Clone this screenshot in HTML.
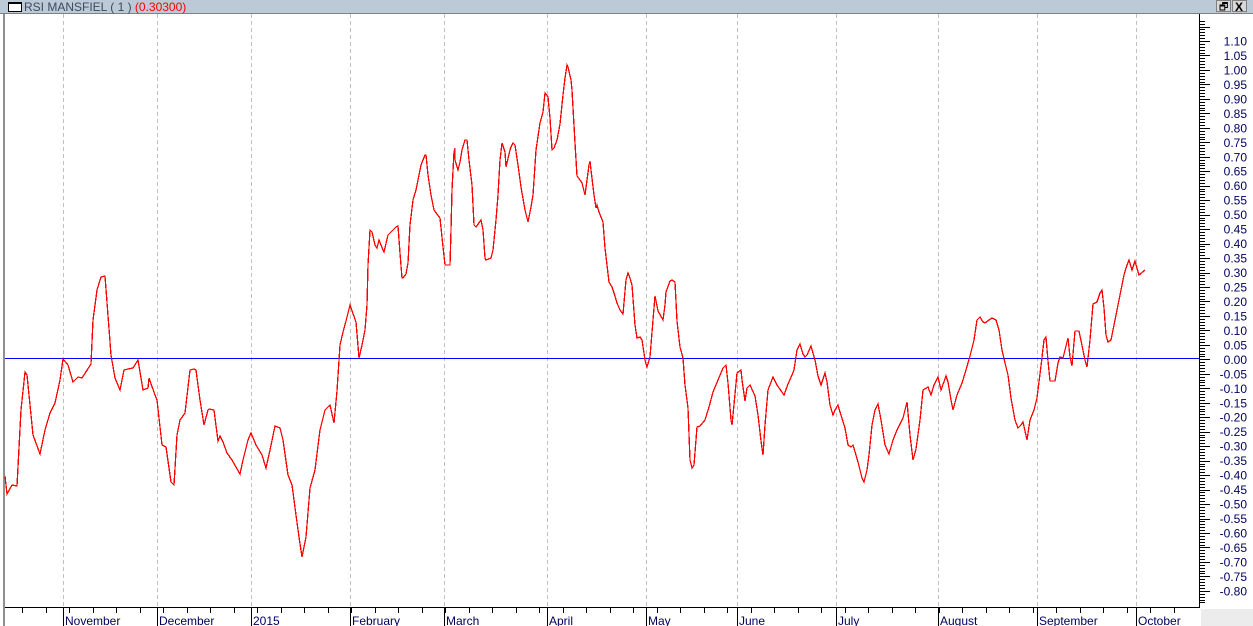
<!DOCTYPE html>
<html><head><meta charset="utf-8"><style>
html,body{margin:0;padding:0;width:1253px;height:626px;overflow:hidden;background:#fff}
svg{display:block}
text{font-family:"Liberation Sans",Arial,sans-serif}
</style></head><body>
<svg id="s" width="1253" height="626" xmlns="http://www.w3.org/2000/svg">
<rect x="0" y="0" width="1253" height="13" fill="#bccad8"/>
<line x1="0" y1="13.5" x2="1253" y2="13.5" stroke="#808080" stroke-width="1"/>
<rect x="8.5" y="2.5" width="13" height="9" fill="#fff" stroke="#000" stroke-width="1"/>
<line x1="8" y1="3" x2="22" y2="3" stroke="#000" stroke-width="2"/>
<text x="24" y="11" font-size="12" fill="#3c4a5a">RSI MANSFIEL ( 1 ) <tspan fill="#ff0000">(0.30300)</tspan></text>
<rect x="1216.5" y="0.5" width="14" height="11" fill="#d8d8d8" stroke="#808080"/>
<rect x="1232.5" y="0.5" width="14" height="11" fill="#d8d8d8" stroke="#808080"/>
<text x="1219" y="10" font-size="10" fill="#000">🗗</text>
<text x="1235" y="11" font-size="12" fill="#000" font-weight="bold">X</text>
<rect x="3" y="14" width="2" height="612" fill="#909090"/>
<g id="grid" stroke="#c0c0c0" stroke-dasharray="4,3" stroke-width="1"></g>
<line x1="5" y1="358.5" x2="1200" y2="358.5" stroke="#0000ff" stroke-width="1"/>
<polyline id="rl" fill="none" stroke="#ff0000" stroke-width="1.3" shape-rendering="crispEdges" points=""/>
<g id="ax" stroke="#000" stroke-width="1"></g>
<g id="lb" font-size="12" fill="#000060"></g>
<rect x="1201" y="609" width="52" height="17" fill="#ececec"/>
</svg>
<script>
var ns="http://www.w3.org/2000/svg";
function el(p,t,a,tx){var e=document.createElementNS(ns,t);for(var k in a)e.setAttribute(k,a[k]);if(tx)e.textContent=tx;document.getElementById(p).appendChild(e);}
var months=[[63,"November"],[157,"December"],[251,"2015"],[350,"February"],[444,"March"],[547,"April"],[646,"May"],[737,"June"],[836,"July"],[938,"August"],[1037,"September"],[1136,"October"]];
months.forEach(function(m){el("grid","line",{x1:m[0]+.5,y1:14,x2:m[0]+.5,y2:607});
el("ax","line",{x1:m[0]+.5,y1:607,x2:m[0]+.5,y2:626});
el("lb","text",{x:m[0]+2,y:625},m[1]);});
el("ax","line",{x1:5,y1:607.5,x2:1200,y2:607.5});
for(var x=22;x<1196;x+=23.5){el("ax","line",{x1:Math.round(x)+.5,y1:607,x2:Math.round(x)+.5,y2:613});}
el("ax","line",{x1:1199.5,y1:14,x2:1199.5,y2:607});
var d=14.47;
for(var k=-10;k<=200;k++){var y=41+k*d/5;if(y<18||y>605)continue;var maj=(k%5==0);
el("ax","line",{x1:1200,y1:Math.round(y)+.5,x2:maj?1210:1205,y2:Math.round(y)+.5});}
for(var j=0;j<=38;j++){var v=1.10-j*0.05;var y=41+j*d;var s=(Math.abs(v)<0.001?"0.00":v.toFixed(2));if(s=="-0.00")s="0.00";
el("lb","text",{x:1247,y:y+4.5,"text-anchor":"end"},s);}
var pts="5,476 7,494 12,485 17,486 21,410 25,372 27,375 33,435 40,454 45,430 50,413 55,403 60,380 63,359 68,365 73,382 78,377 82,378 91,364 93,320 97,290 101,277 105,276 111,355 115,378 120,390 124,370 128,369 133,368 138,360 143,390 148,388 149,378 155,395 157,400 162,445 166,447 171,482 174,485 177,435 180,420 185,413 190,370 194,369 196,370 200,400 204,425 208,410 209,409 214,410 218,441 220,436 223,442 227,453 232,460 236,467 240,474 243,460 248,440 251,433 256,445 262,455 266,468 270,450 275,426 280,428 283,440 288,475 292,485 296,515 299,537 302,557 306,537 310,488 315,470 320,430 325,410 330,405 334,423 337,391 340,345 343,332 346,321 350,305 351,308 356,322 359,358 362,345 365,330 367,305 368,265 370,230 372,232 375,245 377,248 379,240 383,250 384,252 388,235 396,227 398,226 400,253 402,278 403,278 406,274 408,263 410,225 413,200 416,190 421,165 425,155 426,155 428,175 431,195 434,210 440,218 443,247 445,265 450,265 451,230 452,190 454,152 455,148 455,160 458,170 460,162 462,150 465,140 467,140 469,160 472,185 474,225 476,227 481,220 483,230 485,258 486,260 491,258 493,250 496,220 498,195 500,160 502,143 505,152 506,167 510,150 511,147 513,143 515,145 518,165 521,187 525,210 528,222 531,207 533,195 536,150 540,123 543,112 545,93 548,97 550,118 552,150 554,148 557,140 560,124 563,95 565,78 567,65 568,67 571,80 572,90 575,143 577,176 580,180 582,183 585,195 589,165 590,161 591,170 594,195 596,208 597,205 599,212 603,222 605,248 609,282 612,287 615,296 617,303 620,310 623,314 626,280 628,273 630,278 632,285 635,325 637,338 640,337 642,340 645,360 647,367 650,357 653,320 655,296 658,311 663,320 665,305 666,292 670,281 672,280 675,282 677,321 680,347 683,358 685,385 688,408 690,460 692,468 694,465 697,427 700,426 705,420 709,407 713,392 718,380 723,368 726,365 728,383 731,420 732,425 733,415 737,373 741,370 742,380 745,401 747,388 750,385 755,396 758,415 761,441 763,455 765,425 768,390 773,377 777,385 784,395 788,384 792,375 794,370 797,350 800,344 803,354 805,357 807,355 811,346 815,360 818,376 821,385 825,373 827,382 830,405 833,415 835,410 838,405 840,412 845,428 848,445 851,447 853,445 856,455 858,462 862,478 864,482 867,470 869,455 872,425 875,410 878,404 881,420 885,445 889,454 893,440 897,430 903,418 907,402 910,435 913,460 916,449 920,420 923,390 928,387 931,395 934,385 938,377 941,390 946,376 948,382 951,400 953,410 957,395 962,383 966,370 970,356 974,340 977,320 980,317 983,322 985,323 989,320 992,318 996,320 999,330 1002,350 1005,363 1008,375 1011,398 1015,420 1018,428 1021,425 1023,422 1027,440 1030,420 1034,410 1037,398 1041,366 1044,340 1046,337 1048,361 1050,381 1055,381 1058,363 1060,357 1063,358 1066,346 1068,338 1070,357 1072,366 1075,331 1079,331 1085,360 1087,367 1090,340 1093,304 1097,302 1100,293 1102,290 1104,308 1106,335 1108,342 1111,340 1115,320 1120,295 1124,275 1127,265 1129,260 1132,270 1135,261 1139,275 1145,270";
document.getElementById("rl").setAttribute("points",pts);
</script>
</body></html>
